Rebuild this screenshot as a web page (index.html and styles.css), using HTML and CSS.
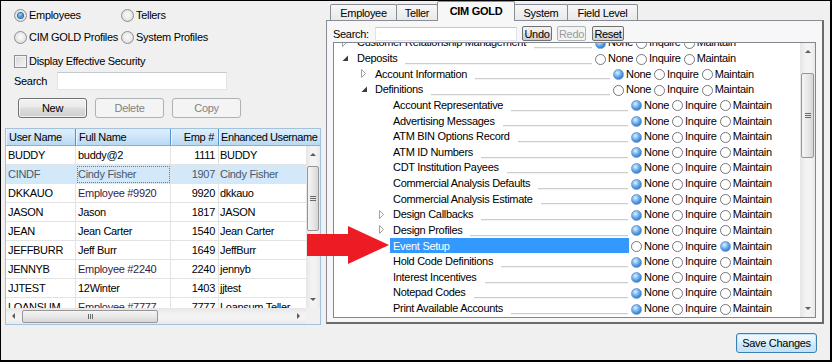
FILE: index.html
```html
<!DOCTYPE html>
<html>
<head>
<meta charset="utf-8">
<link rel="stylesheet" href="styles.css">
</head>
<body>
<div class="window">
  <div class="left">
    <div class="opt-row">
      <div class="opt"><span class="radio on"></span>Employees</div>
      <div class="opt"><span class="radio"></span>Tellers</div>
    </div>
    <div class="opt-row r2">
      <div class="opt"><span class="radio"></span>CIM GOLD Profiles</div>
      <div class="opt"><span class="radio"></span>System Profiles</div>
    </div>
    <div class="opt-row r3">
      <div class="opt wide"><span class="check"></span>Display Effective Security</div>
    </div>
    <div class="search-row"><span class="lbl">Search</span><span class="input"></span></div>
    <div class="btn-row"><span class="btn">New</span><span class="btn dis">Delete</span><span class="btn dis">Copy</span></div>
    <div class="grid">
      <div class="ghead">
        <div class="h c1">User Name</div>
        <div class="h c2">Full Name</div>
        <div class="h c3 num">Emp #</div>
        <div class="h c4h">Enhanced Username</div>
      </div>
      <div class="gbody">
        <div class="grow"><div class="c c1">BUDDY</div><div class="c c2">buddy@2</div><div class="c c3 num">1111</div><div class="c c4">BUDDY</div></div>
        <div class="grow gsel"><div class="c c1">CINDF</div><div class="c c2 focus">Cindy Fisher</div><div class="c c3 num">1907</div><div class="c c4">Cindy Fisher</div></div>
        <div class="grow"><div class="c c1">DKKAUO</div><div class="c c2 emp">Employee #9920</div><div class="c c3 num">9920</div><div class="c c4">dkkauo</div></div>
        <div class="grow"><div class="c c1">JASON</div><div class="c c2">Jason</div><div class="c c3 num">1817</div><div class="c c4">JASON</div></div>
        <div class="grow"><div class="c c1">JEAN</div><div class="c c2">Jean Carter</div><div class="c c3 num">1540</div><div class="c c4">Jean Carter</div></div>
        <div class="grow"><div class="c c1">JEFFBURR</div><div class="c c2">Jeff Burr</div><div class="c c3 num">1649</div><div class="c c4">JeffBurr</div></div>
        <div class="grow"><div class="c c1">JENNYB</div><div class="c c2 emp">Employee #2240</div><div class="c c3 num">2240</div><div class="c c4">jennyb</div></div>
        <div class="grow"><div class="c c1">JJTEST</div><div class="c c2">12Winter</div><div class="c c3 num">1403</div><div class="c c4">jjtest</div></div>
        <div class="grow"><div class="c c1">LOANSUM</div><div class="c c2 emp">Employee #7777</div><div class="c c3 num">7777</div><div class="c c4">Loansum Teller</div></div>
      </div>
      <div class="vscroll gvs">
        <div class="sarr"><span class="tri-up"></span></div>
        <div class="vthumb gthumb"><span class="grip-h"></span></div>
        <div class="sarr bottom"><span class="tri-down"></span></div>
      </div>
      <div class="hscroll">
        <div class="harr"><span class="tri-left"></span></div>
        <div class="hthumb"><span class="grip-v"></span></div>
        <div class="harr right"><span class="tri-right"></span></div>
      </div>
      <div class="corner"></div>
    </div>
  </div>

  <div class="right">
    <div class="tabs">
      <div class="tab t1">Employee</div>
      <div class="tab t2">Teller</div>
      <div class="tab t3 sel">CIM GOLD</div>
      <div class="tab t4">System</div>
      <div class="tab t5">Field Level</div>
    </div>
    <div class="panel">
      <div class="srow">
        <span class="lbl">Search:</span>
        <span class="sinput"></span>
        <span class="sbtn b-undo">Undo</span>
        <span class="sbtn b-redo dis">Redo</span>
        <span class="sbtn b-reset">Reset</span>
      </div>
      <div class="tree">
        <div class="tree-rows">
          <div class="tree-inner">
            <div class="tr l1"><span class="exp"><svg width="6" height="9" viewBox="0 0 6 9"><polygon points="0.5,0.5 4.5,4.5 0.5,8.5" fill="#fff" stroke="#a0a0a0"/></svg></span><span class="lab">Customer Relationship Management<i class="line"></i></span><span class="rg"><i class="rb on"></i><span class="rt">None</span><i class="rb"></i><span class="rt">Inquire</span><i class="rb"></i><span class="rt">Maintain</span></span></div>
            <div class="tr l1"><span class="exp"><svg width="7" height="7" viewBox="0 0 7 7"><polygon points="6,0.5 6,6 0.5,6" fill="#3c3c3c"/></svg></span><span class="lab">Deposits<i class="line"></i></span><span class="rg"><i class="rb"></i><span class="rt">None</span><i class="rb"></i><span class="rt">Inquire</span><i class="rb"></i><span class="rt">Maintain</span></span></div>
            <div class="tr l2"><span class="exp"><svg width="6" height="9" viewBox="0 0 6 9"><polygon points="0.5,0.5 4.5,4.5 0.5,8.5" fill="#fff" stroke="#a0a0a0"/></svg></span><span class="lab">Account Information<i class="line"></i></span><span class="rg"><i class="rb on"></i><span class="rt">None</span><i class="rb"></i><span class="rt">Inquire</span><i class="rb"></i><span class="rt">Maintain</span></span></div>
            <div class="tr l2"><span class="exp"><svg width="7" height="7" viewBox="0 0 7 7"><polygon points="6,0.5 6,6 0.5,6" fill="#3c3c3c"/></svg></span><span class="lab">Definitions<i class="line"></i></span><span class="rg"><i class="rb"></i><span class="rt">None</span><i class="rb"></i><span class="rt">Inquire</span><i class="rb"></i><span class="rt">Maintain</span></span></div>
            <div class="tr l3"><span class="exp"></span><span class="lab">Account Representative<i class="line"></i></span><span class="rg"><i class="rb on"></i><span class="rt">None</span><i class="rb"></i><span class="rt">Inquire</span><i class="rb"></i><span class="rt">Maintain</span></span></div>
            <div class="tr l3"><span class="exp"></span><span class="lab">Advertising Messages<i class="line"></i></span><span class="rg"><i class="rb on"></i><span class="rt">None</span><i class="rb"></i><span class="rt">Inquire</span><i class="rb"></i><span class="rt">Maintain</span></span></div>
            <div class="tr l3"><span class="exp"></span><span class="lab">ATM BIN Options Record<i class="line"></i></span><span class="rg"><i class="rb on"></i><span class="rt">None</span><i class="rb"></i><span class="rt">Inquire</span><i class="rb"></i><span class="rt">Maintain</span></span></div>
            <div class="tr l3"><span class="exp"></span><span class="lab">ATM ID Numbers<i class="line"></i></span><span class="rg"><i class="rb on"></i><span class="rt">None</span><i class="rb"></i><span class="rt">Inquire</span><i class="rb"></i><span class="rt">Maintain</span></span></div>
            <div class="tr l3"><span class="exp"></span><span class="lab">CDT Institution Payees<i class="line"></i></span><span class="rg"><i class="rb on"></i><span class="rt">None</span><i class="rb"></i><span class="rt">Inquire</span><i class="rb"></i><span class="rt">Maintain</span></span></div>
            <div class="tr l3"><span class="exp"></span><span class="lab">Commercial Analysis Defaults<i class="line"></i></span><span class="rg"><i class="rb on"></i><span class="rt">None</span><i class="rb"></i><span class="rt">Inquire</span><i class="rb"></i><span class="rt">Maintain</span></span></div>
            <div class="tr l3"><span class="exp"></span><span class="lab">Commercial Analysis Estimate<i class="line"></i></span><span class="rg"><i class="rb on"></i><span class="rt">None</span><i class="rb"></i><span class="rt">Inquire</span><i class="rb"></i><span class="rt">Maintain</span></span></div>
            <div class="tr l3"><span class="exp"><svg width="6" height="9" viewBox="0 0 6 9"><polygon points="0.5,0.5 4.5,4.5 0.5,8.5" fill="#fff" stroke="#a0a0a0"/></svg></span><span class="lab">Design Callbacks<i class="line"></i></span><span class="rg"><i class="rb on"></i><span class="rt">None</span><i class="rb"></i><span class="rt">Inquire</span><i class="rb"></i><span class="rt">Maintain</span></span></div>
            <div class="tr l3"><span class="exp"><svg width="6" height="9" viewBox="0 0 6 9"><polygon points="0.5,0.5 4.5,4.5 0.5,8.5" fill="#fff" stroke="#a0a0a0"/></svg></span><span class="lab">Design Profiles<i class="line"></i></span><span class="rg"><i class="rb on"></i><span class="rt">None</span><i class="rb"></i><span class="rt">Inquire</span><i class="rb"></i><span class="rt">Maintain</span></span></div>
            <div class="tr l3 tsel"><span class="exp"></span><span class="lab">Event Setup<i class="line"></i></span><span class="rg"><i class="rb"></i><span class="rt">None</span><i class="rb"></i><span class="rt">Inquire</span><i class="rb on"></i><span class="rt">Maintain</span></span></div>
            <div class="tr l3"><span class="exp"></span><span class="lab">Hold Code Definitions<i class="line"></i></span><span class="rg"><i class="rb on"></i><span class="rt">None</span><i class="rb"></i><span class="rt">Inquire</span><i class="rb"></i><span class="rt">Maintain</span></span></div>
            <div class="tr l3"><span class="exp"></span><span class="lab">Interest Incentives<i class="line"></i></span><span class="rg"><i class="rb on"></i><span class="rt">None</span><i class="rb"></i><span class="rt">Inquire</span><i class="rb"></i><span class="rt">Maintain</span></span></div>
            <div class="tr l3"><span class="exp"></span><span class="lab">Notepad Codes<i class="line"></i></span><span class="rg"><i class="rb on"></i><span class="rt">None</span><i class="rb"></i><span class="rt">Inquire</span><i class="rb"></i><span class="rt">Maintain</span></span></div>
            <div class="tr l3"><span class="exp"></span><span class="lab">Print Available Accounts<i class="line"></i></span><span class="rg"><i class="rb on"></i><span class="rt">None</span><i class="rb"></i><span class="rt">Inquire</span><i class="rb"></i><span class="rt">Maintain</span></span></div>
          </div>
        </div>
        <div class="vscroll tvs">
          <div class="sarr"><span class="tri-up"></span></div>
          <div class="vthumb tthumb"><span class="grip-h"></span></div>
          <div class="sarr bottom"><span class="tri-down"></span></div>
        </div>
      </div>
    </div>
    <div class="save-row"><span class="save">Save Changes</span></div>
  </div>
</div>
<svg class="arrow" width="832" height="362" viewBox="0 0 832 362">
  <polygon points="307,234 348,234 348,226 389,245 348,264 348,256 307,256" fill="#ed1c24"/>
</svg>
</body>
</html>
```

FILE: styles.css
```css
* { box-sizing: border-box; margin: 0; padding: 0; }
html, body { width: 832px; height: 362px; overflow: hidden; }
body {
  font-family: "Liberation Sans", Arial, sans-serif;
  font-size: 11px;
  letter-spacing: -0.3px;
  color: #000;
  background: #000;
}
i { font-style: normal; }

.window {
  width: 832px;
  height: 362px;
  border-style: solid;
  border-color: #000;
  border-width: 1px 2px 2px 1px;
  background: #f0f0f0;
  display: grid;
  grid-template-columns: 324px 1fr;
}

/* ---------- left side ---------- */
.left { display: flex; flex-direction: column; padding-top: 6px; }
.opt-row { display: flex; align-items: center; height: 16px; margin-left: 13px; }
.r2 { margin-top: 6px; }
.r3 { margin-top: 8px; }
.opt { display: flex; align-items: center; width: 107px; white-space: nowrap; }
.opt.wide { width: auto; }

.radio {
  width: 13px; height: 13px; border-radius: 50%;
  border: 1px solid #8e8f8f;
  background: radial-gradient(circle at 50% 45%, #fbfbfb 0, #ececec 45%, #cfcfcf 100%);
  margin-right: 2px;
  display: flex; align-items: center; justify-content: center;
}
.radio.on::after {
  content: ""; width: 5px; height: 5px; border-radius: 50%;
  background: radial-gradient(circle at 40% 35%, #a9d6f7 0, #3a8fd6 55%, #1a5a9c 100%);
  box-shadow: 0 0 0 1px #2b6cb0;
}
.check {
  width: 13px; height: 13px;
  border: 1px solid #8e8f8f;
  background: linear-gradient(135deg, #d6d6d6, #f6f6f6);
  box-shadow: inset 0 0 0 1px #f4f4f4;
  margin-right: 2px;
}

.search-row { display: flex; align-items: center; height: 18px; margin: 3px 0 0 13px; }
.search-row .lbl { width: 43px; }
.input {
  width: 170px; height: 18px; background: #fff;
  border: 1px solid #e2e3ea; border-top-color: #c6c8cf;
}

.btn-row { display: flex; gap: 8px; margin: 8px 0 0 17px; height: 20px; }
.btn {
  width: 69px; height: 20px;
  display: flex; align-items: center; justify-content: center;
  border: 1px solid #707070; border-radius: 3px;
  background: linear-gradient(#f2f2f2 0%, #ebebeb 45%, #dddddd 50%, #cfcfcf 100%);
  box-shadow: inset 0 0 0 1px rgba(255,255,255,0.7);
}
.btn.dis {
  border-color: #adb2b5; background: #f4f4f4; color: #838383; box-shadow: none;
}

/* grid */
.grid {
  margin: 10px 0 0 4px;
  width: 316px; height: 197px;
  border: 1px solid #a5c2dc;
  background: #fff;
  display: grid;
  grid-template-columns: 300px 14px;
  grid-template-rows: 17px 162px 1fr;
}
.ghead { grid-column: 1 / 3; display: flex; }
.h {
  height: 17px;
  display: flex; align-items: center;
  padding-left: 3px;
  border-right: 1px solid #4f93d2;
  border-bottom: 1px solid #7fb4e2;
  background: linear-gradient(#deeefb 0%, #cde5f8 50%, #b7d9f4 100%);
  box-shadow: inset 1px 0 0 #eef7fe;
  white-space: nowrap; overflow: hidden;
}
.h.num { justify-content: flex-end; padding-right: 4px; }
.c1 { width: 70px; }
.c2 { width: 95px; }
.c3 { width: 48px; }
.c4 { width: 87px; }
.c4h { width: 101px; border-right: none; padding-left: 2px; letter-spacing: -0.4px; }

.gbody { overflow: hidden; }
.grow { display: flex; height: 19px; }
.c {
  height: 19px;
  display: flex; align-items: center;
  padding-left: 2px;
  border-right: 1px solid #e3e3e3;
  border-bottom: 1px solid #e3e3e3;
  white-space: nowrap; overflow: hidden;
}
.c.num { justify-content: flex-end; padding-right: 3px; }
.c.c4 { border-right: none; padding-left: 1px; }
.c.emp { color: #3a1c48; }
.gsel .c { background: #d3e8f8; color: #46596d; }
.gsel .focus { outline: 1px dotted #6d7a87; outline-offset: -2px; }

/* scrollbars */
.vscroll {
  display: flex; flex-direction: column; align-items: center;
  background: linear-gradient(to right, #e6e6e6, #f3f3f3 40%, #f3f3f3 70%, #e9e9e9);
}
.gvs { grid-column: 2; grid-row: 2; }
.sarr { height: 17px; width: 100%; display: flex; align-items: center; justify-content: center; }
.sarr.bottom { margin-top: auto; }
.tri-up { width: 0; height: 0; border-left: 3px solid transparent; border-right: 3px solid transparent; border-bottom: 3px solid #5c5c5c; }
.tri-down { width: 0; height: 0; border-left: 3px solid transparent; border-right: 3px solid transparent; border-top: 3px solid #5c5c5c; }
.tri-left { width: 0; height: 0; border-top: 3px solid transparent; border-bottom: 3px solid transparent; border-right: 3px solid #5c5c5c; }
.tri-right { width: 0; height: 0; border-top: 3px solid transparent; border-bottom: 3px solid transparent; border-left: 3px solid #5c5c5c; }
.vthumb {
  width: 12px;
  border: 1px solid #969696; border-radius: 2px;
  background: linear-gradient(to right, #f5f5f5, #e8e8e8 50%, #d6d6d6);
  display: flex; align-items: center; justify-content: center;
}
.gthumb { margin-top: 3px; height: 65px; }
.grip-h {
  width: 6px; height: 5px;
  background: repeating-linear-gradient(#6a6a6a 0 1px, transparent 1px 2px);
}
.hscroll {
  grid-column: 1; grid-row: 3;
  display: flex; align-items: center;
  background: linear-gradient(#e6e6e6, #f3f3f3 40%, #f3f3f3 70%, #e9e9e9);
}
.harr { width: 15px; height: 100%; display: flex; align-items: center; justify-content: center; }
.harr.right { margin-left: auto; }
.hthumb {
  width: 136px; height: 13px; margin-left: 1px;
  border: 1px solid #969696; border-radius: 2px;
  background: linear-gradient(#f5f5f5, #e8e8e8 50%, #d6d6d6);
  display: flex; align-items: center; justify-content: center;
}
.grip-v {
  width: 5px; height: 5px;
  background: repeating-linear-gradient(to right, #6a6a6a 0 1px, transparent 1px 2px);
}
.corner { grid-column: 2; grid-row: 3; background: #f0f0f0; }

/* ---------- right side ---------- */
.right { display: flex; flex-direction: column; }
.tabs { display: flex; align-items: flex-end; height: 19px; margin-left: 5px; position: relative; z-index: 1; }
.tab {
  height: 16px;
  border: 1px solid #898c95; border-bottom: none;
  margin-left: -1px;
  background: linear-gradient(#f7f7f7, #e9e9e9);
  display: flex; align-items: center; justify-content: center;
  white-space: nowrap;
  border-radius: 2px 2px 0 0;
}
.t1 { width: 67px; margin-left: 0; }
.t2 { width: 42px; }
.t3 { width: 78px; }
.t4 { width: 54px; }
.t5 { width: 71px; }
.tab.sel {
  height: 20px; margin-bottom: -1px;
  background: #f7f7f7;
  font-weight: bold;
  padding-bottom: 2px;
  position: relative; z-index: 2;
}

.panel {
  margin-left: 1px;
  width: 498px; height: 304px;
  border: 1px solid #898c95;
  border-right: 2px solid #6b6b6b;
  border-bottom: 2px solid #6b6b6b;
  background: #f7f7f7;
  padding: 5px 0 0 6px;
  display: flex; flex-direction: column;
}
.srow { display: flex; align-items: center; height: 15px; }
.srow .lbl { width: 42px; }
.sinput {
  width: 142px; height: 14px; background: #fff;
  border: 1px solid #e2e3ea; border-top-color: #c6c8cf;
  margin-right: 5px;
}
.sbtn {
  height: 15px;
  display: flex; align-items: center; justify-content: center;
  border: 1px solid #707070; border-radius: 2px;
  background: linear-gradient(#f2f2f2 0%, #ebebeb 45%, #dddddd 50%, #cfcfcf 100%);
}
.b-undo { width: 30px; margin-right: 5px; }
.b-redo { width: 29px; margin-right: 6px; }
.b-reset { width: 32px; }
.sbtn.dis { border-color: #adb2b5; background: #f4f4f4; color: #9a9a9a; }

.tree {
  margin-top: 1px;
  width: 483px; height: 276px;
  border: 1px solid #828790;
  background: #fff;
  display: flex;
}
.tree-rows { width: 466px; overflow: hidden; }
.tree-inner { margin-top: -8.4px; }
.tr { display: flex; align-items: center; height: 15.625px; white-space: nowrap; }
.l1 { padding-left: 7px; }
.l2 { padding-left: 25px; }
.l3 { padding-left: 43px; }
.exp { width: 13px; height: 100%; display: flex; align-items: center; padding-left: 2px; }
.l1 .exp { padding-left: 1px; }
.lab {
  width: 239px; height: 100%;
  padding-left: 3px;
  display: flex; align-items: center;
  margin-right: 2px;
}
.lab .line {
  flex: 1; align-self: flex-end;
  height: 1px;
  margin: 0 1px 2px 8px;
  background: #cdcdcd;
  box-shadow: 0 1px 0 #f4f4f4;
}
.tsel .lab { background: #3399ff; color: #fff; }
.tsel .lab .line { visibility: hidden; }
.rg { display: flex; align-items: center; }
.rb {
  width: 11px; height: 11px; border-radius: 50%;
  border: 1px solid #777;
  background: #fff;
  margin-top: 2px;
  flex: none;
}
.rb.on {
  border-color: #6d9bd0;
  background: radial-gradient(circle at 38% 32%, #e2f2ff 0, #8cc4f3 30%, #3683d8 70%, #2466b4 100%);
}
.rt { margin: 0 3px 0 2px; }

.vscroll.tvs { width: 15px; }
.tthumb { width: 13px; margin-top: 13px; height: 85px; }

.save-row { display: flex; justify-content: flex-end; margin-top: 9px; padding-right: 13px; }
.save {
  width: 81px; height: 20px;
  display: flex; align-items: center; justify-content: center;
  border: 1px solid #3c7fb1; border-radius: 3px;
  background: linear-gradient(#f1f8fd 0%, #e3f1fb 45%, #d2e9f8 50%, #c4e2f6 100%);
  box-shadow: inset 0 0 0 1px #c0e5fb;
}

.arrow { position: absolute; left: 0; top: 0; pointer-events: none; }
```
